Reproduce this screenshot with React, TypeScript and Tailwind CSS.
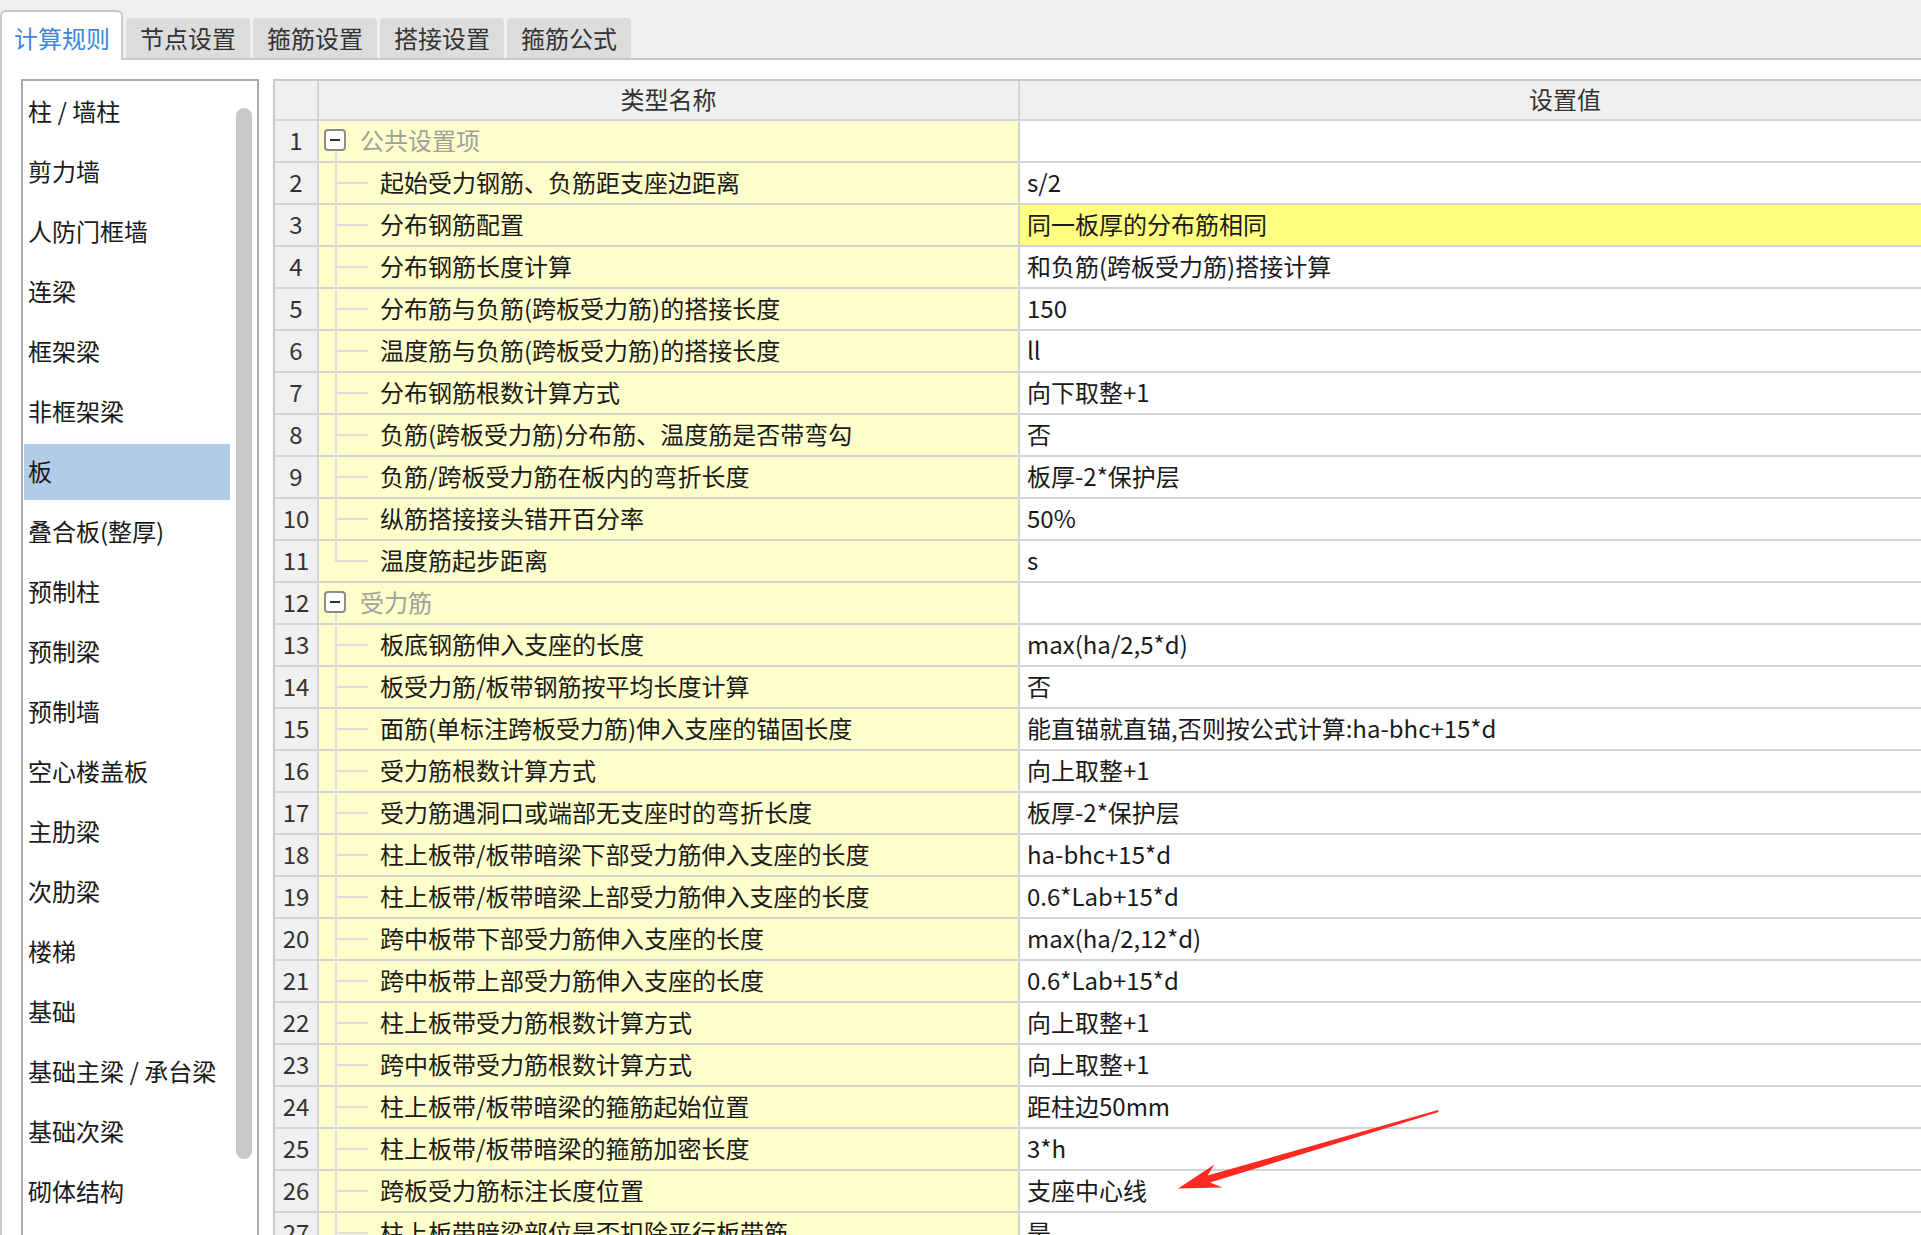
import React from 'react';

type Row = { name: string; value: string; group?: boolean; last?: boolean; highlight?: boolean };

const tabs = ['计算规则', '节点设置', '箍筋设置', '搭接设置', '箍筋公式'];

const categories = [
    '柱 / 墙柱', '剪力墙', '人防门框墙', '连梁', '框架梁', '非框架梁', '板', '叠合板(整厚)',
    '预制柱', '预制梁', '预制墙', '空心楼盖板', '主肋梁', '次肋梁', '楼梯', '基础',
    '基础主梁 / 承台梁', '基础次梁', '砌体结构',
];

const rows: Row[] = [
    { name: '公共设置项', value: '', group: true },
    { name: '起始受力钢筋、负筋距支座边距离', value: 's/2' },
    { name: '分布钢筋配置', value: '同一板厚的分布筋相同', highlight: true },
    { name: '分布钢筋长度计算', value: '和负筋(跨板受力筋)搭接计算' },
    { name: '分布筋与负筋(跨板受力筋)的搭接长度', value: '150' },
    { name: '温度筋与负筋(跨板受力筋)的搭接长度', value: 'll' },
    { name: '分布钢筋根数计算方式', value: '向下取整+1' },
    { name: '负筋(跨板受力筋)分布筋、温度筋是否带弯勾', value: '否' },
    { name: '负筋/跨板受力筋在板内的弯折长度', value: '板厚-2*保护层' },
    { name: '纵筋搭接接头错开百分率', value: '50%' },
    { name: '温度筋起步距离', value: 's', last: true },
    { name: '受力筋', value: '', group: true },
    { name: '板底钢筋伸入支座的长度', value: 'max(ha/2,5*d)' },
    { name: '板受力筋/板带钢筋按平均长度计算', value: '否' },
    { name: '面筋(单标注跨板受力筋)伸入支座的锚固长度', value: '能直锚就直锚,否则按公式计算:ha-bhc+15*d' },
    { name: '受力筋根数计算方式', value: '向上取整+1' },
    { name: '受力筋遇洞口或端部无支座时的弯折长度', value: '板厚-2*保护层' },
    { name: '柱上板带/板带暗梁下部受力筋伸入支座的长度', value: 'ha-bhc+15*d' },
    { name: '柱上板带/板带暗梁上部受力筋伸入支座的长度', value: '0.6*Lab+15*d' },
    { name: '跨中板带下部受力筋伸入支座的长度', value: 'max(ha/2,12*d)' },
    { name: '跨中板带上部受力筋伸入支座的长度', value: '0.6*Lab+15*d' },
    { name: '柱上板带受力筋根数计算方式', value: '向上取整+1' },
    { name: '跨中板带受力筋根数计算方式', value: '向上取整+1' },
    { name: '柱上板带/板带暗梁的箍筋起始位置', value: '距柱边50mm' },
    { name: '柱上板带/板带暗梁的箍筋加密长度', value: '3*h' },
    { name: '跨板受力筋标注长度位置', value: '支座中心线' },
    { name: '柱上板带暗梁部位是否扣除平行板带筋', value: '是' },
];

function NameCell({ row }: { row: Row }) {
    if (row.group) {
        return (
            <div className="relative h-[42px] border-r-2 border-b-2 border-[#d4d4d4] bg-[#ffffcc] flex items-center pl-[41px] pb-[2px] text-[#a0a0a0]">
                <div className="absolute left-[5px] top-[8px] w-[22px] h-[22px] border-2 border-[#8c8c8c] rounded-[4px] bg-white flex items-center justify-center">
                    <div className="w-[10px] h-[2px] bg-[#333]" />
                </div>
                <div className="absolute left-[16px] top-[30px] bottom-[-2px] w-[2px] bg-[#e0e0e0]" />
                {row.name}
            </div>
        );
    }
    return (
        <div className="relative h-[42px] border-r-2 border-b-2 border-[#d4d4d4] bg-[#ffffcc] flex items-center pl-[61px] pb-[2px] text-[#1a1a1a] whitespace-nowrap">
            {row.last ? (
                <div className="absolute left-[16px] top-0 h-[21px] w-[2px] bg-[#e0e0e0]" />
            ) : (
                <div className="absolute left-[16px] top-0 bottom-[-2px] w-[2px] bg-[#e0e0e0]" />
            )}
            <div className="absolute left-[18px] top-[19px] w-[31px] h-[2px] bg-[#e0e0e0]" />
            {row.name}
        </div>
    );
}

export default function App() {
    return (
        <div className="relative h-[1235px] w-[1921px] overflow-hidden bg-white text-[24px] leading-none font-['Noto_Sans_CJK_SC','Noto_Sans',sans-serif]">
            {/* tab strip */}
            <div className="h-[60px] bg-[#f0f0f0] border-b-2 border-[#c8c8c8] flex items-end">
                {tabs.map((t, i) =>
                    i === 0 ? (
                        <div
                            key={t}
                            className="h-[50px] -mb-[2px] w-[123px] bg-white border-2 border-b-0 border-[#c8c8c8] rounded-t-[6px] flex items-center pl-[12px] pt-[3px] text-[#3b87e0]"
                        >
                            {t}
                        </div>
                    ) : (
                        <div
                            key={t}
                            className="h-[40px] w-[124px] ml-[3px] bg-[#dcdcdc] rounded-t-[4px] flex items-center justify-center pb-[1px] text-[#333]"
                        >
                            {t}
                        </div>
                    )
                )}
            </div>

            {/* body */}
            <div className="flex border-l-2 border-[#c8c8c8] h-[1175px]">
                {/* category list */}
                <div className="ml-[19px] mt-[19px] w-[238px] h-[1200px] border-2 border-[#ababab] flex shrink-0">
                    <div className="w-[213px] pt-[3px]">
                        {categories.map(c => (
                            <div
                                key={c}
                                className={`h-[56px] mb-[4px] ml-[1px] w-[206px] pl-[4px] pb-[2px] flex items-center text-[#1a1a1a] whitespace-nowrap ${c === '板' ? 'bg-[#b3cde9]' : ''}`}
                            >
                                {c}
                            </div>
                        ))}
                    </div>
                    <div className="mt-[27px] w-[16px] h-[1051px] rounded-full bg-[#c9c9c9]" />
                </div>

                {/* rules table */}
                <div className="ml-[14px] mt-[19px] shrink-0 border-t-2 border-l-2 border-[#c8c8c8]">
                    <div className="grid grid-cols-[44px_701px_1092px]">
                        <div className="h-[40px] bg-[#f0f0f0] border-r-2 border-b-2 border-[#d4d4d4]" />
                        <div className="h-[40px] bg-[#f0f0f0] border-r-2 border-b-2 border-[#d4d4d4] flex items-center justify-center pb-[2px] text-[#333]">
                            类型名称
                        </div>
                        <div className="h-[40px] bg-[#f0f0f0] border-r-2 border-b-2 border-[#d4d4d4] flex items-center justify-center pb-[2px] text-[#333]">
                            设置值
                        </div>
                        {rows.map((r, i) => (
                            <React.Fragment key={i}>
                                <div className="h-[42px] bg-[#f0f0f0] border-r-2 border-b-2 border-[#d4d4d4] flex items-center justify-center pb-[2px] text-[#333]">
                                    {i + 1}
                                </div>
                                <NameCell row={r} />
                                <div
                                    className={`h-[42px] border-b-2 border-[#d4d4d4] flex items-center pl-[7px] pb-[2px] text-[#1a1a1a] whitespace-nowrap ${r.highlight ? 'bg-[#ffff80]' : 'bg-white'}`}
                                >
                                    {r.value}
                                </div>
                            </React.Fragment>
                        ))}
                    </div>
                </div>
            </div>

            {/* red annotation arrow */}
            <svg className="absolute inset-0 pointer-events-none" width="1921" height="1235" viewBox="0 0 1921 1235">
                <polygon
                    points="1438,1110 1438.6,1112 1210,1182.5 1222.5,1187.5 1178,1188.5 1214.5,1164.5 1207.5,1175.5"
                    fill="#ff2a1f"
                />
            </svg>
        </div>
    );
}
